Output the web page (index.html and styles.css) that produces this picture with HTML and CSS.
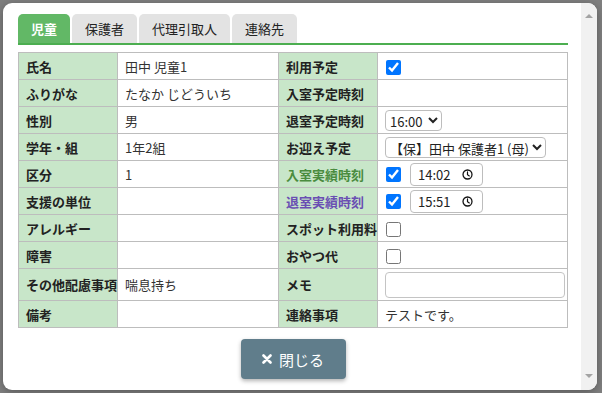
FILE: index.html
```html
<!DOCTYPE html>
<html lang="ja">
<head>
    <meta charset="UTF-8">
    <meta name="viewport" content="width=device-width, initial-scale=1.0">
    <title>児童詳細</title>
    <link rel="stylesheet" href="styles.css">
</head>
<body>

    <div class="modal">
        <div class="modal-body">
            <div class="tabs">
                <div class="tab active">児童</div>
                <div class="tab">保護者</div>
                <div class="tab">代理引取人</div>
                <div class="tab">連絡先</div>
            </div>

            <table class="detail">
                <colgroup>
                    <col class="col-label">
                    <col class="col-value">
                    <col class="col-label">
                    <col class="col-wide">
                </colgroup>
                <tr>
                    <th>氏名</th>
                    <td>田中 児童1</td>
                    <th>利用予定</th>
                    <td><input type="checkbox" checked></td>
                </tr>
                <tr>
                    <th>ふりがな</th>
                    <td>たなか じどういち</td>
                    <th>入室予定時刻</th>
                    <td></td>
                </tr>
                <tr>
                    <th>性別</th>
                    <td>男</td>
                    <th>退室予定時刻</th>
                    <td>
                        <select class="time-select">
                            <option>16:00</option>
                        </select>
                    </td>
                </tr>
                <tr>
                    <th>学年・組</th>
                    <td>1年2組</td>
                    <th>お迎え予定</th>
                    <td>
                        <select class="pickup-select">
                            <option>【保】田中 保護者1 (母)</option>
                        </select>
                    </td>
                </tr>
                <tr>
                    <th>区分</th>
                    <td>1</td>
                    <th class="in-label">入室実績時刻</th>
                    <td>
                        <div class="actual">
                            <input type="checkbox" checked>
                            <div class="time-input">
                                <span>14:02</span>
                                <svg width="11" height="11" viewBox="0 0 12 12">
                                    <circle cx="6" cy="6" r="4.9" fill="none" stroke="#111" stroke-width="1.4"/>
                                    <path d="M6 3.2 V6.2 L8 7.6" fill="none" stroke="#111" stroke-width="1.3" stroke-linecap="round"/>
                                </svg>
                            </div>
                        </div>
                    </td>
                </tr>
                <tr>
                    <th>支援の単位</th>
                    <td></td>
                    <th class="out-label">退室実績時刻</th>
                    <td>
                        <div class="actual">
                            <input type="checkbox" checked>
                            <div class="time-input">
                                <span>15:51</span>
                                <svg width="11" height="11" viewBox="0 0 12 12">
                                    <circle cx="6" cy="6" r="4.9" fill="none" stroke="#111" stroke-width="1.4"/>
                                    <path d="M6 3.2 V6.2 L8 7.6" fill="none" stroke="#111" stroke-width="1.3" stroke-linecap="round"/>
                                </svg>
                            </div>
                        </div>
                    </td>
                </tr>
                <tr>
                    <th>アレルギー</th>
                    <td></td>
                    <th>スポット利用料</th>
                    <td><input type="checkbox"></td>
                </tr>
                <tr>
                    <th>障害</th>
                    <td></td>
                    <th>おやつ代</th>
                    <td><input type="checkbox"></td>
                </tr>
                <tr class="memo-row">
                    <th>その他配慮事項</th>
                    <td>喘息持ち</td>
                    <th>メモ</th>
                    <td><input type="text" class="memo"></td>
                </tr>
                <tr>
                    <th>備考</th>
                    <td></td>
                    <th>連絡事項</th>
                    <td>テストです。</td>
                </tr>
            </table>

            <div class="footer">
                <button class="close-btn">
                    <svg width="10" height="10" viewBox="0 0 10 10">
                        <path d="M1.5 1.5 L8.5 8.5 M8.5 1.5 L1.5 8.5" stroke="#fff" stroke-width="2.6" stroke-linecap="round"/>
                    </svg>
                    閉じる
                </button>
            </div>
        </div>

        <div class="scrollbar">
            <span class="arrow-up"></span>
            <span class="arrow-down"></span>
        </div>
    </div>

</body>
</html>
```

FILE: styles.css
```css
body {
    margin: 0;
    padding: 3px 5px 3px 3px;
    background-color: #7f7f7f;
    font-family: "Noto Sans CJK JP", "Noto Sans", sans-serif;
    font-size: 13px;
    color: #222;
}
.modal {
    display: flex;
    height: 387px;
    background-color: #fff;
    border-radius: 9px;
    overflow: hidden;
    box-shadow: 0 2px 8px rgba(0, 0, 0, 0.3);
}
.modal-body {
    flex: 1;
    padding: 11px 13px 0 15px;
}
.scrollbar {
    width: 17px;
    display: flex;
    flex-direction: column;
    justify-content: space-between;
    align-items: center;
    padding: 11px 0 12px;
    background-color: #f1f1f1;
}
.arrow-up,
.arrow-down {
    width: 0;
    height: 0;
    border-left: 4px solid transparent;
    border-right: 4px solid transparent;
}
.arrow-up {
    border-bottom: 4px solid #a3a3a3;
}
.arrow-down {
    border-top: 4px solid #a3a3a3;
}
.tabs {
    display: flex;
    gap: 2px;
    border-bottom: 2px solid #4cae50;
}
.tab {
    height: 29px;
    line-height: 29px;
    padding: 0 13px;
    background-color: #e3e3e3;
    border-radius: 5px 5px 0 0;
    color: #222;
}
.tab.active {
    background-color: #62b866;
    color: #fff;
    font-weight: bold;
}
.detail {
    width: 549px;
    table-layout: fixed;
    margin-top: 7px;
    border-collapse: collapse;
    border: 1px solid #bdbdbd;
}
.col-label {
    width: 99px;
}
.col-value {
    width: 161px;
}
.col-wide {
    width: 190px;
}
.detail th,
.detail td {
    height: 26px;
    padding: 0 7px;
    border: 1px solid #bdbdbd;
    text-align: left;
    white-space: nowrap;
}
.detail th {
    background-color: #c8e6c9;
    font-weight: bold;
    color: #222;
}
.detail td {
    color: #333;
}
.detail .in-label {
    color: #4a8c3f;
}
.detail .out-label {
    color: #6a4fb3;
}
.memo-row th,
.memo-row td {
    height: 31px;
}
input[type="checkbox"] {
    width: 15px;
    height: 15px;
    margin: 0 0 0 1px;
    vertical-align: middle;
}
.actual {
    display: flex;
    align-items: center;
    gap: 9px;
}
.time-input {
    box-sizing: border-box;
    width: 73px;
    height: 23px;
    display: flex;
    align-items: center;
    justify-content: space-between;
    padding: 0 9px 0 7px;
    border: 1px solid #bdbdbd;
    border-radius: 4px;
    color: #222;
    background: #fff;
}
select {
    box-sizing: border-box;
    height: 21px;
    padding: 0;
    border: 1px solid #bdbdbd;
    border-radius: 4px;
    background: #fff;
    font-family: inherit;
    font-size: 13px;
    color: #222;
    vertical-align: middle;
}
.time-select {
    width: 57px;
}
.pickup-select {
    width: 161px;
}
.memo {
    box-sizing: border-box;
    width: 180px;
    height: 26px;
    border: 1px solid #c4c4c4;
    border-radius: 4px;
    vertical-align: middle;
}
.footer {
    display: flex;
    justify-content: center;
    padding: 11px 0 11px;
}
.close-btn {
    display: flex;
    align-items: center;
    justify-content: center;
    gap: 7px;
    width: 105px;
    height: 40px;
    border: none;
    border-radius: 4px;
    background-color: #607d8b;
    color: #fff;
    font-family: inherit;
    font-size: 15px;
    box-shadow: 0 2px 4px rgba(0, 0, 0, 0.3);
}
```
